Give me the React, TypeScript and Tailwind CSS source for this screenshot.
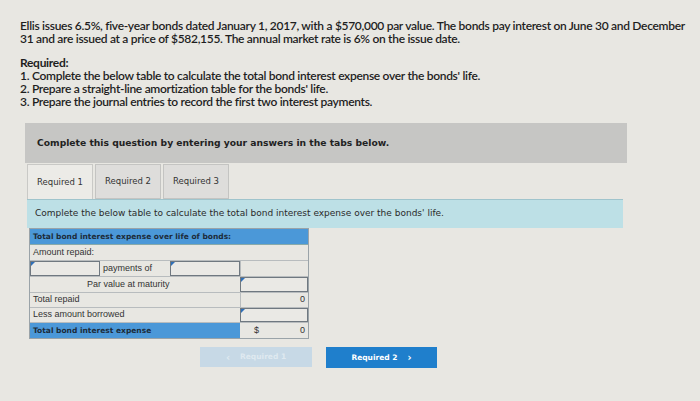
import React from "react";

const Marker = () => (
  <span className="absolute left-0 top-0 w-0 h-0 border-t-[4px] border-t-[#2f6fb8] border-r-[4px] border-r-transparent" />
);

const InputBox = ({ className = "" }: { className?: string }) => (
  <div className={`relative border border-[#6f7880] bg-[#eae9e5] h-full ${className}`}>
    <Marker />
  </div>
);

export default function App() {
  const para = "font-['Lato','Open_Sans',sans-serif] text-[12px] leading-[13px] text-[#1e1e1e]";
  const verd = "font-['DejaVu_Sans',sans-serif]";
  return (
    <div className="w-[700px] h-[401px] bg-[#e8e7e2] overflow-hidden">
      <div className={`${para} pt-[19px] pl-[20px] pr-[4px] font-semibold tracking-[-0.3px]`}>
        <p>
          Ellis issues 6.5%, five-year bonds dated January 1, 2017, with a $570,000 par value. The bonds pay interest on June 30 and December
          31 and are issued at a price of $582,155. The annual market rate is 6% on the issue date.
        </p>
        <div className="mt-[11px]">
          <p className="font-bold">Required:</p>
          <p>1. Complete the below table to calculate the total bond interest expense over the bonds' life.</p>
          <p>2. Prepare a straight-line amortization table for the bonds' life.</p>
          <p>3. Prepare the journal entries to record the first two interest payments.</p>
        </div>
      </div>

      <div className={`${verd} ml-[25px] mt-[15px] w-[602px] h-[40px] bg-[#c6c6c4] flex items-center pl-[12px] text-[9.2px] font-bold text-[#222]`}>
        Complete this question by entering your answers in the tabs below.
      </div>

      <div className={`${verd} ml-[27px] mt-[1px] flex gap-[2px] text-[8.5px] text-[#333]`}>
        <div className="w-[66px] h-[35px] bg-[#ecebe7] border border-[#c9c9c6] border-b-0 flex items-center justify-center">Required 1</div>
        <div className="w-[66px] h-[35px] bg-[#dedddb] border border-[#c4c4c2] flex items-center justify-center">Required 2</div>
        <div className="w-[66px] h-[35px] bg-[#dedddb] border border-[#c4c4c2] flex items-center justify-center">Required 3</div>
      </div>

      <div className={`${verd} ml-[27px] w-[596px] h-[29px] bg-[#bde0e6] border-t border-[#9fc4cc] flex items-center pl-[8px] text-[9px] text-[#2a2a2a]`}>
        Complete the below table to calculate the total bond interest expense over the bonds' life.
      </div>

      <div className="ml-[29px] w-[280px] border border-[#9aa3a8] text-[9px] font-['Liberation_Sans',sans-serif] text-[#333]">
        <div className={`${verd} h-[16px] bg-[#4b98d8] flex items-center pl-[3px] font-bold text-[7.5px] text-[#1c2b3a] border-b border-[#8aa]`}>
          Total bond interest expense over life of bonds:
        </div>
        <div className="h-[16px] flex items-center pl-[3px] border-b border-[#b8bcbe]">Amount repaid:</div>
        <div className="h-[16px] flex border-b border-[#b8bcbe]">
          <InputBox className="w-[70px]" />
          <div className="w-[70px] flex items-center pl-[3px]">payments of</div>
          <InputBox className="w-[70px]" />
          <div className="flex-1 border-l border-[#b8bcbe]" />
        </div>
        <div className="h-[16px] flex border-b border-[#b8bcbe]">
          <div className="w-[210px] flex items-center pl-[57px]">Par value at maturity</div>
          <InputBox className="flex-1" />
        </div>
        <div className="h-[15px] flex border-b border-[#b8bcbe]">
          <div className="w-[210px] flex items-center pl-[3px]">Total repaid</div>
          <div className="flex-1 border-l border-[#b8bcbe] flex items-center justify-end pr-[3px]">0</div>
        </div>
        <div className="h-[15px] flex border-b border-[#b8bcbe]">
          <div className="w-[210px] flex items-center pl-[3px]">Less amount borrowed</div>
          <InputBox className="flex-1" />
        </div>
        <div className="h-[15px] flex">
          <div className={`${verd} w-[210px] bg-[#4b98d8] flex items-center pl-[3px] font-bold text-[7.5px] text-[#1c2b3a]`}>Total bond interest expense</div>
          <div className="flex-1 flex items-center justify-between pl-[14px] pr-[3px]">
            <span>$</span>
            <span>0</span>
          </div>
        </div>
      </div>

      <div className={`${verd} mt-[8px] flex gap-[14px] ml-[200px] text-[7.5px] font-bold`}>
        <div className="w-[112px] h-[20px] bg-[#c7d9e6] text-[#dfe9f0] flex items-center justify-center gap-[10px]">
          <span className="text-[10px]">‹</span>
          <span>Required 1</span>
        </div>
        <div className="w-[111px] h-[21px] bg-[#1f7fcc] text-white flex items-center justify-center gap-[10px]">
          <span>Required 2</span>
          <span className="text-[10px]">›</span>
        </div>
      </div>
    </div>
  );
}
